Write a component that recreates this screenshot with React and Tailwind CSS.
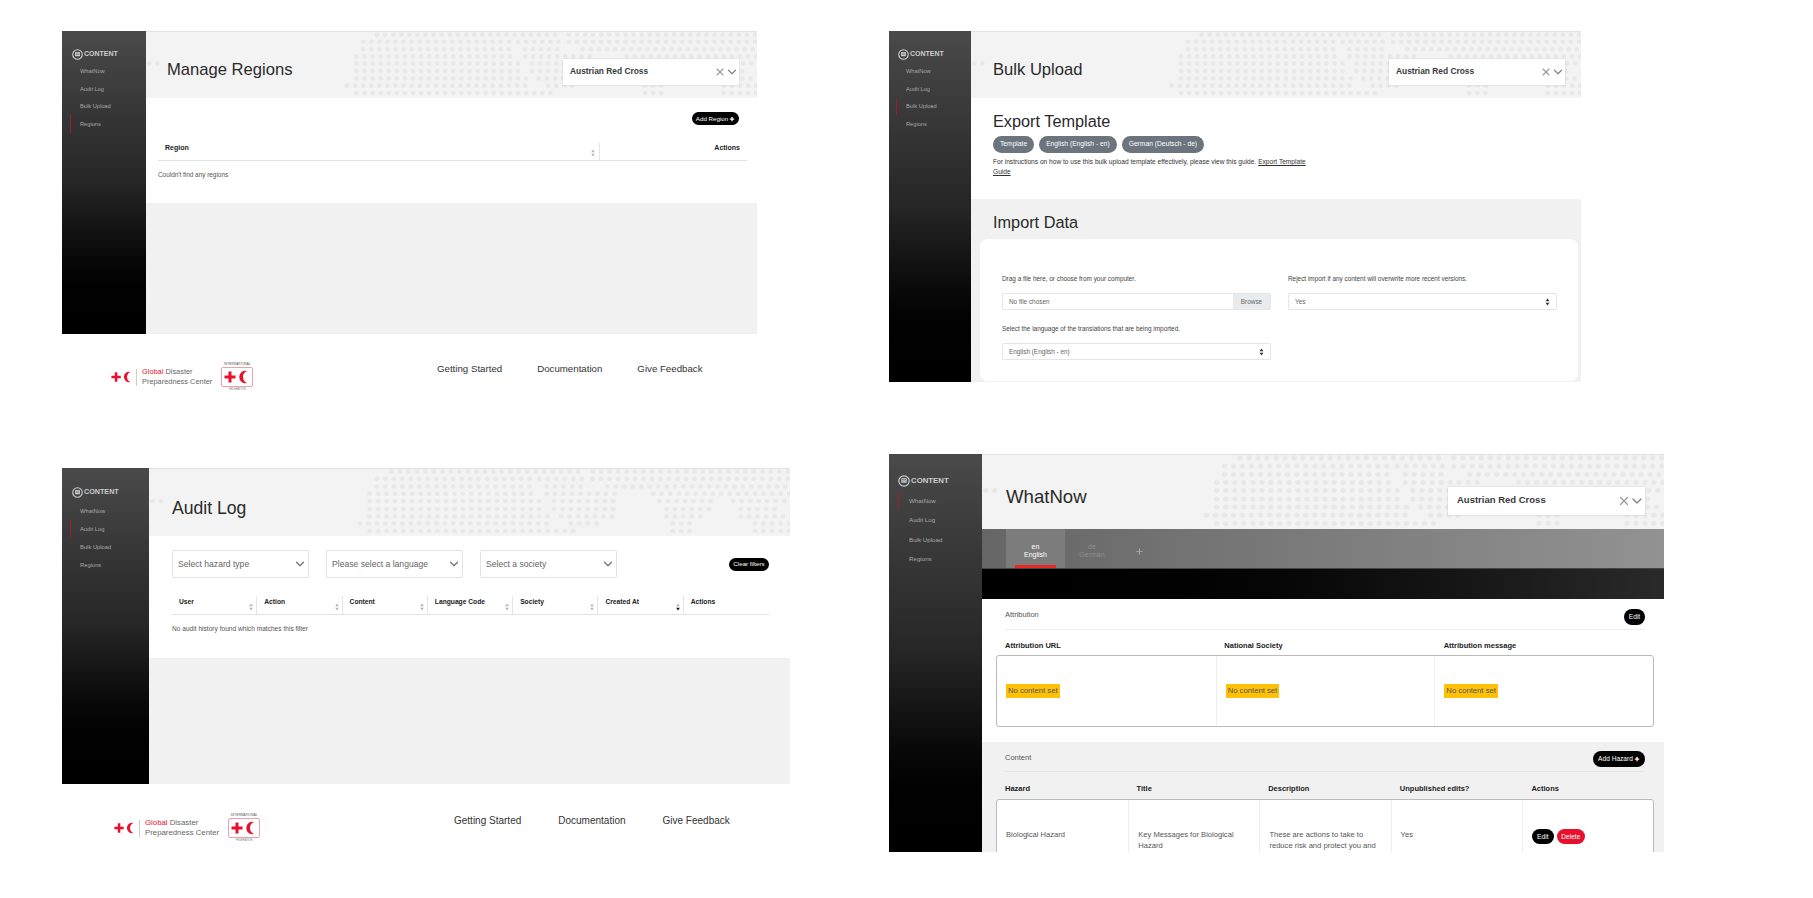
import { ChevronDown, Plus, X } from 'lucide-react';

// rows of the dotted world map behind the page headers: [y, [from, to], ...]
const MAP_ROWS = [
  [33, [705, 1100], [1120, 1527]],
  [55, [675, 990], [1010, 1100], [1120, 1527]],
  [78, [675, 1005], [1025, 1110], [1150, 1527]],
  [100, [660, 1005], [1025, 1175], [1245, 1527]],
  [122, [212, 235], [660, 1020], [1040, 1175], [1258, 1375], [1410, 1527]],
  [146, [660, 1020], [1040, 1175], [1272, 1360], [1425, 1500]],
  [168, [660, 1035], [1055, 1160], [1272, 1345], [1425, 1515]],
  [190, [640, 1035], [1075, 1140], [1285, 1330], [1455, 1527]],
  [213, [660, 1095], [1285, 1330], [1455, 1527]],
];

function DotMap() {
  const dots = [];
  MAP_ROWS.forEach(([y, ...segments]) => {
    segments.forEach(([from, to]) => {
      for (let x = from; x <= to; x += 17.5) dots.push([x, y]);
    });
  });
  return (
    <svg className="absolute inset-0 w-full h-full" viewBox="205 25 1322 203" preserveAspectRatio="none">
      {dots.map(([x, y]) => (
        <ellipse key={`${x}-${y}`} cx={x} cy={y} rx="5" ry="7" fill="#e8e8e8" />
      ))}
    </svg>
  );
}

const SIDEBARS = {
  xs: { box: 'w-[82px]', head: 'pt-[17px] pl-[9px]', list: 'mt-[3px]', item: 'h-[17.4px] ml-[7px] pl-[9px] text-[5.7px]', label: 'text-[7px]', icon: 11 },
  sm: { box: 'w-[84px]', head: 'pt-[17px] pl-[10px]', list: 'mt-[3px]', item: 'h-[17.4px] ml-[8px] pl-[9px] text-[5.7px]', label: 'text-[7px]', icon: 11 },
  md: { box: 'w-[87px]', head: 'pt-[18px] pl-[10px]', list: 'mt-[4px]', item: 'h-[18px] ml-[8px] pl-[9px] text-[5.8px]', label: 'text-[7.2px]', icon: 11 },
  lg: { box: 'w-[93px]', head: 'pt-[21px] pl-[9px]', list: 'mt-[4px]', item: 'h-[19.4px] ml-[9px] pl-[10px] text-[6.2px]', label: 'text-[7.8px]', icon: 12 },
};

function Sidebar({ active, size = 'sm' }) {
  const s = SIDEBARS[size];
  return (
    <aside className={`${s.box} shrink-0 bg-gradient-to-b from-[#4a4a4a] via-[#262626] to-black`}>
      <div className={`${s.head} flex items-center gap-[1px] h-auto`}>
        <svg width={s.icon} height={s.icon} viewBox="0 0 12 12" fill="none">
          <circle cx="6" cy="6" r="5.2" stroke="#cfcfcf" strokeWidth="1.2" />
          <rect x="3.3" y="3.2" width="5.4" height="4.6" rx="0.6" fill="#cfcfcf" />
          <path d="M4 4.5h4M4 6h4" stroke="#444" strokeWidth="0.5" />
        </svg>
        <span className={`${s.label} font-bold text-[#cdcdcd] leading-[12px]`}>CONTENT</span>
      </div>
      <nav className={s.list}>
        {['WhatNow', 'Audit Log', 'Bulk Upload', 'Regions'].map((name) => (
          <div
            key={name}
            className={`${s.item} flex items-center text-[#a8a8a8] border-l ${name === active ? 'border-[#a3182a]' : 'border-transparent'}`}
          >
            {name}
          </div>
        ))}
      </nav>
    </aside>
  );
}

const HEADERS = {
  xs: { box: 'h-[67px]', title: 'text-[16.6px]', titlePad: 'pl-[22px] pt-[11px]', select: 'w-[176px] h-[26px] mr-[16px] mt-[13px] pl-[7px]', text: 'text-[8.4px]', x: 12, chev: 14, xMargin: '-mr-[1px]' },
  sm: { box: 'h-[67px]', title: 'text-[16.6px]', titlePad: 'pl-[21px] pt-[11px]', select: 'w-[176px] h-[26px] mr-[18px] mt-[13px] pl-[7px]', text: 'text-[8.4px]', x: 12, chev: 14, xMargin: '-mr-[1px]' },
  md: { box: 'h-[68px]', title: 'text-[17.6px]', titlePad: 'pl-[23px] pt-[12px]', select: '', text: '', x: 12, chev: 14, xMargin: '' },
  lg: { box: 'h-[75px]', title: 'text-[18.6px]', titlePad: 'pl-[24px] pt-[10px]', select: 'w-[197px] h-[28px] mr-[19px] mt-[17px] pl-[9px]', text: 'text-[9.5px]', x: 14, chev: 16, xMargin: '-mr-[2px]' },
};

function PageHeader({ title, size = 'sm', society = true }) {
  const h = HEADERS[size];
  return (
    <header className={`${h.box} relative shrink-0 bg-[#f3f3f3] border-t border-[#e2e2e2] flex items-center justify-between overflow-hidden`}>
      <DotMap />
      <h1 className={`relative ${h.title} ${h.titlePad} text-[#2a2a2a]`}>{title}</h1>
      {society && (
        <div className={`relative ${h.select} bg-white flex items-center shadow-[0_0_2px_rgba(0,0,0,0.15)]`}>
          <span className={`${h.text} font-bold text-[#3a3a3a]`}>Austrian Red Cross</span>
          <X size={h.x} strokeWidth={2.2} className={`ml-auto text-[#999] ${h.xMargin}`} />
          <ChevronDown size={h.chev} strokeWidth={2.2} className="text-[#888]" />
        </div>
      )}
    </header>
  );
}

function Sort({ down }) {
  return (
    <svg width="4" height="8" viewBox="0 0 4 8" className="shrink-0">
      <path d="M2 0.5 3.8 3.2H0.2z" fill="#b5b5b5" />
      <path d="M2 7.5 3.8 4.8H0.2z" fill={down ? '#111' : '#b5b5b5'} />
    </svg>
  );
}

function Pill({ children, className = '' }) {
  return (
    <button className={`bg-black text-white rounded-full flex items-center justify-center whitespace-nowrap ${className}`}>
      {children}
    </button>
  );
}

function SelectArrows() {
  return (
    <svg width="5" height="8" viewBox="0 0 5 8" className="shrink-0">
      <path d="M2.5 0.5 4.5 3.2H0.5zM2.5 7.5 4.5 4.8H0.5z" fill="#333" />
    </svg>
  );
}

function RedCross({ className = '' }) {
  return (
    <svg viewBox="0 0 26 14" className={className}>
      <path d="M4.5 1.5h3v4h4v3h-4v4h-3v-4h-4v-3h4z" fill="#e8112d" />
      <path d="M23 1A6.2 6.2 0 1 0 23 13A6.5 6.5 0 0 1 23 1z" fill="#e8112d" />
    </svg>
  );
}

function Footer({ size }) {
  const lg = size === 'lg';
  return (
    <footer className={`flex ${lg ? 'pl-[52px] pt-[27px]' : 'pl-[49px] pt-[26px]'}`}>
      <div className={`flex items-center ${lg ? 'w-[340px] h-[34px]' : 'w-[326px] h-[34px]'}`}>
        <RedCross className="w-[22px] h-[12px]" />
        <div className="w-px h-[17px] bg-[#ccc] ml-[3px] mr-[5px]" />
        <div className={`${lg ? 'text-[7.8px]' : 'text-[7.4px]'} leading-[10px] text-[#666] whitespace-nowrap`}>
          <div><span className="text-[#e8112d]">Global</span> Disaster</div>
          <div>Preparedness Center</div>
        </div>
        <div className="ml-[9px] flex flex-col items-center">
          <span className="text-[3.4px] leading-[5px] text-[#555]">INTERNATIONAL</span>
          <div className="w-[32px] h-[20px] border border-[#f0a0aa] rounded-[2px] flex items-center justify-center">
            <RedCross className="w-[26px] h-[14px]" />
          </div>
          <span className="text-[2.6px] leading-[5px] text-[#777]">FEDERATION</span>
        </div>
      </div>
      <div className={`flex mt-[2px] text-[#333] ${lg ? 'text-[10px] gap-[37px]' : 'text-[9.7px] gap-[35px]'}`}>
        <a>Getting Started</a>
        <a>Documentation</a>
        <a>Give Feedback</a>
      </div>
    </footer>
  );
}

function ManageRegions() {
  return (
    <section className="w-[695px] h-[303px] flex bg-[#f1f1f1]">
      <Sidebar active="Regions" />
      <main className="flex-1 flex flex-col">
        <PageHeader title="Manage Regions" />
        <div className="h-[105px] bg-white pl-[12px] pr-[10px] pt-[14px]">
          <div className="flex justify-end pr-[8px]">
            <Pill className="w-[47px] h-[13px] text-[6.2px] gap-[1px]">Add Region <Plus size={6} strokeWidth={5} /></Pill>
          </div>
          <div className="mt-[18px] flex h-[18px] border-b-[1.5px] border-[#dfe2e6] text-[7px] font-bold text-[#222]">
            <div className="flex-1 flex justify-between border-r border-[#e6e6e6] pl-[7px] pr-[4px]">
              <span>Region</span>
              <span className="mt-[6px]"><Sort /></span>
            </div>
            <div className="w-[147px] text-right pr-[7px]">Actions</div>
          </div>
          <p className="mt-[9px] text-[6.4px] leading-[10px] text-[#555]">Couldn&apos;t find any regions</p>
        </div>
      </main>
    </section>
  );
}

const AUDIT_COLS = ['User', 'Action', 'Content', 'Language Code', 'Society', 'Created At', 'Actions'];

function AuditLog() {
  return (
    <section className="w-[728px] h-[316px] flex bg-[#f1f1f1]">
      <Sidebar active="Audit Log" size="md" />
      <main className="flex-1 flex flex-col">
        <PageHeader title="Audit Log" size="md" society={false} />
        <div className="h-[122px] bg-white pl-[23px] pr-[21px] pt-[14px]">
          <div className="flex gap-[17px] items-center">
            {['Select hazard type', 'Please select a language', 'Select a society'].map((label) => (
              <div key={label} className="w-[137px] h-[28px] border border-[#e3e3e3] rounded-[2px] pl-[5px] pr-[1px] flex items-center justify-between text-[8.6px] text-[#666]">
                {label}
                <ChevronDown size={14} strokeWidth={2.2} className="text-[#777]" />
              </div>
            ))}
            <Pill className="ml-auto w-[40px] h-[13px] text-[6.2px]">Clear filters</Pill>
          </div>
          <div className="mt-[18px] grid grid-cols-7 h-[19px] border-b-[1.5px] border-[#dfe2e6] text-[6.7px] font-bold text-[#222]">
            {AUDIT_COLS.map((col, i) => (
              <div key={col} className={`flex justify-between pl-[7px] pr-[3px] ${i < 6 ? 'border-r border-[#e6e6e6]' : ''}`}>
                <span className="leading-[12px]">{col}</span>
                {i < 6 && <span className="mt-[7px]"><Sort down={col === 'Created At'} /></span>}
              </div>
            ))}
          </div>
          <p className="mt-[9px] text-[6.6px] leading-[10px] text-[#555]">No audit history found which matches this filter</p>
        </div>
      </main>
    </section>
  );
}

function FieldBox({ children, className = '' }) {
  return (
    <div className={`h-[17px] border border-[#e6e6e6] rounded-[1px] flex items-center text-[6.4px] text-[#666] ${className}`}>
      {children}
    </div>
  );
}

function BulkUpload() {
  return (
    <section className="w-[692px] h-[351px] flex bg-[#f1f1f1] overflow-hidden">
      <Sidebar active="Bulk Upload" size="xs" />
      <main className="flex-1 flex flex-col">
        <PageHeader title="Bulk Upload" size="xs" />
        <div className="h-[101px] shrink-0 bg-white pl-[22px] pt-[13px]">
          <h2 className="text-[16.3px] leading-[20px] text-[#2a2a2a]">Export Template</h2>
          <div className="mt-[5px] flex gap-[5px]">
            {['Template', 'English (English - en)', 'German (Deutsch - de)'].map((t) => (
              <span key={t} className="h-[17px] px-[7px] rounded-full bg-[#6c757d] text-white text-[6.7px] flex items-center">{t}</span>
            ))}
          </div>
          <p className="mt-[4px] w-[320px] text-[6.6px] leading-[10px] text-[#333]">
            For instructions on how to use this bulk upload template effectively, please view this guide.{' '}
            <a className="underline">Export Template</a>
            <br />
            <a className="underline">Guide</a>
          </p>
        </div>
        <div className="pt-[13px]">
          <h2 className="pl-[22px] text-[16.3px] leading-[20px] text-[#2a2a2a]">Import Data</h2>
          <div className="mt-[7px] ml-[9px] w-[598px] h-[142px] bg-white rounded-lg pl-[22px] pt-[35px]">
            <div className="grid grid-cols-[269px_269px] gap-x-[17px] gap-y-[14px] text-[6.4px] text-[#444]">
              <div>
                <p className="leading-[10px] mb-[9px]">Drag a file here, or choose from your computer.</p>
                <FieldBox className="pl-[6px]">
                  No file chosen
                  <span className="ml-auto w-[37px] h-full bg-[#e9ecef] flex items-center justify-center">Browse</span>
                </FieldBox>
              </div>
              <div>
                <p className="leading-[10px] mb-[9px]">Reject import if any content will overwrite more recent versions.</p>
                <FieldBox className="px-[6px] justify-between">Yes <SelectArrows /></FieldBox>
              </div>
              <div>
                <p className="leading-[10px] mb-[9px]">Select the language of the translations that are being imported.</p>
                <FieldBox className="px-[6px] justify-between">English (English - en) <SelectArrows /></FieldBox>
              </div>
            </div>
          </div>
        </div>
      </main>
    </section>
  );
}

function NoContent() {
  return <span className="h-[14px] px-[2px] bg-[#ffc107] text-[#555] text-[7.7px] flex items-center">No content set</span>;
}

function WhatNow() {
  return (
    <section className="mt-[72px] w-[775px] h-[398px] flex bg-[#f1f1f1] overflow-hidden">
      <Sidebar active="WhatNow" size="lg" />
      <main className="flex-1 flex flex-col min-w-0">
        <PageHeader title="WhatNow" size="lg" />
        <div className="h-[40px] shrink-0 flex pl-[24px] bg-gradient-to-r from-[#666] to-[#929292] border-b border-[#444]">
          <div className="w-[59px] bg-[#7c7c7c] flex flex-col items-center text-white text-[7px] leading-[7.5px] pt-[14px] relative">
            <span>en</span>
            <span>English</span>
            <span className="absolute bottom-0 left-[9px] w-[41px] h-[3px] bg-[#e8281e]" />
          </div>
          <div className="w-[52px] ml-[1px] flex flex-col items-center text-[#8f8f8f] text-[7px] leading-[7.5px] pt-[14px]">
            <span>de</span>
            <span>German</span>
          </div>
          <Plus size={9} strokeWidth={3} className="ml-[17px] mt-[18px] text-[#a5a5a5]" />
        </div>
        <div className="h-[30px] shrink-0 bg-gradient-to-r from-black to-[#2a2a2a]" />

        <div className="h-[143px] shrink-0 bg-white pl-[23px] pr-[19px] pt-[10px]">
          <div className="flex justify-between h-[21px] border-b border-[#eee] text-[7.5px] text-[#555]">
            <span className="leading-[10px] mt-[1px]">Attribution</span>
            <Pill className="w-[21px] h-[16px] text-[6.6px]">Edit</Pill>
          </div>
          <div className="mt-[11px] w-[658px] grid grid-cols-3 text-[7.5px] leading-[10px] font-bold text-[#222]">
            <span>Attribution URL</span>
            <span>National Society</span>
            <span>Attribution message</span>
          </div>
          <div className="mt-[4px] -ml-[9px] w-[658px] h-[72px] border border-[#bbb] rounded-[3px] grid grid-cols-3">
            {[0, 1, 2].map((i) => (
              <div key={i} className={`pl-[9px] flex items-center ${i > 0 ? 'border-l border-[#eee]' : ''}`}>
                <NoContent />
              </div>
            ))}
          </div>
        </div>

        <div className="pl-[23px] pr-[19px] pt-[9px]">
          <div className="flex justify-between h-[21px] border-b border-[#e6e6e6] text-[7.5px] text-[#555]">
            <span className="leading-[10px] mt-[2px]">Content</span>
            <Pill className="w-[52px] h-[16px] text-[6.6px] gap-[1px]">Add Hazard <Plus size={6} strokeWidth={5} /></Pill>
          </div>
          <div className="mt-[12px] w-[658px] grid grid-cols-5 text-[7.5px] leading-[10px] font-bold text-[#222]">
            {['Hazard', 'Title', 'Description', 'Unpublished edits?', 'Actions'].map((h) => <span key={h}>{h}</span>)}
          </div>
          <div className="mt-[5px] -ml-[9px] w-[658px] h-[100px] bg-white border border-[#bbb] rounded-[3px] grid grid-cols-5 text-[7.6px] leading-[11px] text-[#555]">
            <div className="pl-[9px] pt-[29px]">Biological Hazard</div>
            <div className="pl-[9px] pr-[6px] pt-[29px] border-l border-[#eee]">Key Messages for Biological Hazard</div>
            <div className="pl-[9px] pr-[4px] pt-[29px] border-l border-[#eee]">These are actions to take to reduce risk and protect you and</div>
            <div className="pl-[9px] pt-[29px] border-l border-[#eee]">Yes</div>
            <div className="pl-[9px] pt-[29px] border-l border-[#eee] flex items-start gap-[3px]">
              <Pill className="w-[22px] h-[15px] text-[6.6px]">Edit</Pill>
              <Pill className="w-[28px] h-[15px] text-[6.6px] !bg-[#e8112d]">Delete</Pill>
            </div>
          </div>
        </div>
      </main>
    </section>
  );
}

export default function App() {
  return (
    <div className="w-[1813px] h-[898px] bg-white overflow-hidden flex font-['Liberation_Sans',Arial,sans-serif]">
      <div className="w-[827px] ml-[62px] pt-[31px] shrink-0">
        <ManageRegions />
        <div className="h-[134px]"><Footer size="sm" /></div>
        <AuditLog />
        <Footer size="lg" />
      </div>
      <div className="pt-[31px]">
        <BulkUpload />
        <WhatNow />
      </div>
    </div>
  );
}
